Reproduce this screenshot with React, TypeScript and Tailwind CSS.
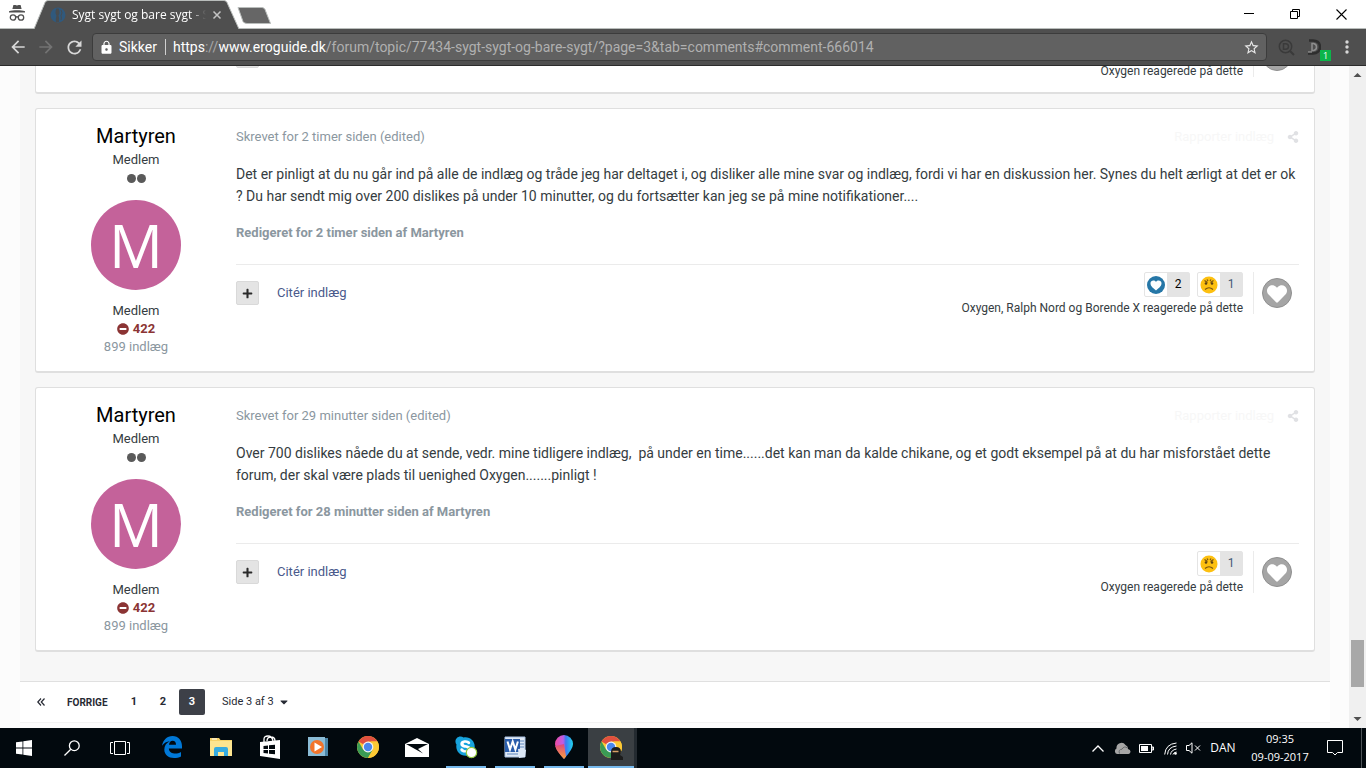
import type { ReactNode } from 'react';
import { clsx } from 'clsx';
import { FaCaretDown, FaHeart, FaMinusCircle, FaPlus, FaShareAlt, FaSkype } from 'react-icons/fa';
import { MdArrowBack, MdArrowForward, MdLock, MdRefresh, MdStarBorder } from 'react-icons/md';

type ReactionKind = 'like' | 'sad';

interface Reaction {
  kind: ReactionKind;
  count: number;
}

interface Post {
  id: number;
  written: string;
  body: string;
  edited: string;
  reactions: Reaction[];
  reactedBy: string;
}

const posts: Post[] = [
  {
    id: 1,
    written: 'Skrevet for 2 timer siden (edited)',
    body: 'Det er pinligt at du nu går ind på alle de indlæg og tråde jeg har deltaget i, og disliker alle mine svar og indlæg, fordi vi har en diskussion her. Synes du helt ærligt at det er ok ? Du har sendt mig over 200 dislikes på under 10 minutter, og du fortsætter kan jeg se på mine notifikationer....',
    edited: 'Redigeret for 2 timer siden af Martyren',
    reactions: [
      { kind: 'like', count: 2 },
      { kind: 'sad', count: 1 },
    ],
    reactedBy: 'Oxygen, Ralph Nord og Borende X reagerede på dette',
  },
  {
    id: 2,
    written: 'Skrevet for 29 minutter siden (edited)',
    body: 'Over 700 dislikes nåede du at sende, vedr. mine tidligere indlæg,\u00a0 på under en time......det kan man da kalde chikane, og et godt eksempel på at du har misforstået dette forum, der skal være plads til uenighed Oxygen.......pinligt !',
    edited: 'Redigeret for 28 minutter siden af Martyren',
    reactions: [{ kind: 'sad', count: 1 }],
    reactedBy: 'Oxygen reagerede på dette',
  },
];

/* ---------- Browser chrome ---------- */

function TitleBar() {
  return (
    <div className="flex h-7 shrink-0 bg-white">
      <div className="flex w-[34px] justify-center pt-1">
        <svg width="18" height="18" viewBox="0 0 18 18" fill="#4f4f4f">
          <path d="M5.4 1h2l1.6.6 1.6-.6h2l1 4H4.400z" />
          <path d="M1 7.200C5 6 13 6 17 7.200v1.300H1z" />
          <g fill="none" stroke="#4f4f4f" strokeWidth="1.300">
            <circle cx="5" cy="13.500" r="2.700" />
            <circle cx="13" cy="13.500" r="2.700" />
            <path d="M7.700 13.200q1.300-.9 2.600 0" />
          </g>
        </svg>
      </div>
      <div className="relative flex h-[29px] w-[205px] items-center pl-4">
        <svg className="absolute inset-0 h-full w-full" viewBox="0 0 205 29">
          <path d="M0 29 11 2.500Q12 .5 14 .5H190Q192 .5 193 2.500L205 29" fill="#4f4f4f" stroke="#b9bdbb" />
        </svg>
        <svg width="16" height="16" viewBox="0 0 16 16" className="relative">
          <circle cx="8" cy="8" r="7.500" fill="#30597d" />
          <path d="M6.500 1.500q-2 4 0 7-1 3-.5 6.500h3q.5-4-.5-6.500 2-3 0-7z" fill="#474c50" />
          <path d="M11 3q2 3 0 5.500.8 3 0 4.500" fill="none" stroke="#474c50" />
        </svg>
        <span className="relative ml-[6px] w-[134px] overflow-hidden whitespace-nowrap text-xs text-white [mask-image:linear-gradient(to_right,#000_118px,transparent)]">
          Sygt sygt og bare sygt - S
        </span>
        <button className="relative ml-[6px]" aria-label="Luk fane">
          <svg width="10" height="10" viewBox="0 0 10 10" stroke="#c4c4c4" strokeWidth="1.500">
            <path d="M1.500 1.500l7 7M8.500 1.500l-7 7" />
          </svg>
        </button>
      </div>
      <button className="-ml-1 mt-[6px] h-5" aria-label="Ny fane">
        <svg width="38" height="20" viewBox="0 0 38 20">
          <path d="M3 1.500H27Q29 1.500 30 3.500L35.500 17.500H12Q9 17.500 8 15.500z" fill="#666" stroke="#b9bdbb" />
        </svg>
      </button>
      <div className="flex-1" />
      <div className="flex pr-0.5">
        <button className="flex w-[46px] items-center justify-center" aria-label="Minimer">
          <svg width="10" height="10" viewBox="0 0 10 10">
            <path d="M0 4.500h10" stroke="#000" />
          </svg>
        </button>
        <button className="flex w-[46px] items-center justify-center" aria-label="Gendan">
          <svg width="10" height="10" viewBox="0 0 10 10" fill="none" stroke="#000">
            <path d="M.5 2.500h7v7h-7zM2.500 2.500v-2h7v7h-2" />
          </svg>
        </button>
        <button className="flex w-[46px] items-center justify-center" aria-label="Luk">
          <svg width="11" height="11" viewBox="0 0 11 11" stroke="#000" strokeWidth="1.100">
            <path d="M.5.5l10 10M10.500.5l-10 10" />
          </svg>
        </button>
      </div>
    </div>
  );
}

function ToolBar() {
  return (
    <div className="flex h-[38px] shrink-0 items-center border-t border-b border-t-[#b9bdbb] border-b-[#2b2b2b] bg-[#4f4f4f] pl-1 text-white">
      <button className="flex w-7 justify-center text-[#d8d8d8]" aria-label="Tilbage">
        <MdArrowBack size={20} />
      </button>
      <button className="flex w-7 justify-center text-[#737373]" aria-label="Frem">
        <MdArrowForward size={20} />
      </button>
      <button className="flex w-7 justify-center text-[#d8d8d8]" aria-label="Genindlæs">
        <MdRefresh size={21} />
      </button>
      <form className="ml-1 flex h-7 min-w-0 flex-1 items-center rounded-sm border border-[#3c3c3c] bg-[#616161] px-[6px] font-[Roboto,sans-serif] text-sm">
        <MdLock size={15} className="shrink-0" />
        <span className="ml-[5px] w-[46px]">Sikker</span>
        <span className="h-4 w-px bg-[#d0d0d0]" />
        <label htmlFor="address" className="ml-[7px] whitespace-nowrap">
          https<span className="text-[#a8a8a8]">://</span>www.eroguide.dk
        </label>
        <input
          id="address"
          type="text"
          className="min-w-0 flex-1 bg-transparent text-[#b0b0b0] outline-none"
          defaultValue="/forum/topic/77434-sygt-sygt-og-bare-sygt/?page=3&tab=comments#comment-666014"
        />
        <button type="button" className="shrink-0 text-[#e8e8e8]" aria-label="Bogmærk">
          <MdStarBorder size={17} />
        </button>
      </form>
      <button className="ml-[5px] flex w-7 justify-center" aria-label="Søgeudvidelse">
        <svg width="17" height="17" viewBox="0 0 17 17" fill="none" stroke="#3a3a3a" strokeWidth="1.500">
          <circle cx="7.500" cy="7.500" r="6.200" />
          <path d="M12 12l4 4" strokeWidth="2" />
          <path d="M5.500 4.800h2q3 .2 3 2.700t-3 2.700h-2z" />
        </svg>
      </button>
      <button className="relative flex w-7 justify-center" aria-label="Udvidelse">
        <svg width="14" height="16" viewBox="0 0 14 16" fill="none">
          <path d="M2 1.500h4q7 .5 7 6.500t-7 6.500H1" stroke="#2e2e2e" strokeWidth="2.500" />
          <path d="M5 4.500h1.500q3 .5 3 3.500t-3 3.500H5z" stroke="#8e8e8e" strokeWidth="1.500" />
          <path d="M1 13h4" stroke="#aaa" />
        </svg>
        <span className="absolute top-[11px] left-[20px] h-[11px] w-[11px] bg-[#0bb54a] text-center text-[9px] leading-[11px]">1</span>
      </button>
      <button className="flex w-[38px] justify-center" aria-label="Menu">
        <svg width="4" height="14" viewBox="0 0 4 14" fill="#d8d8d8">
          <circle cx="2" cy="2" r="1.700" />
          <circle cx="2" cy="7" r="1.700" />
          <circle cx="2" cy="12" r="1.700" />
        </svg>
      </button>
    </div>
  );
}

function ScrollBar() {
  return (
    <div className="flex w-[17px] shrink-0 flex-col items-center bg-[#f0f0f0]">
      <svg width="17" height="17" viewBox="0 0 17 17" fill="#505050">
        <path d="M4.500 11 8.500 7l4 4z" />
      </svg>
      <div className="flex flex-1 flex-col justify-end pb-6">
        <div className="h-[47px] w-[13px] bg-[#a8a8a8]" />
      </div>
      <svg width="17" height="17" viewBox="0 0 17 17" fill="#505050">
        <path d="M4.500 6 8.500 10l4-4z" />
      </svg>
    </div>
  );
}

/* ---------- Forum ---------- */

function ReactionIcon({ kind }: { kind: ReactionKind }) {
  if (kind === 'like') {
    return (
      <svg width="18" height="18" viewBox="0 0 18 18">
        <circle cx="9" cy="9" r="9" fill="#2677a7" />
        <path d="M9 14.500C5 11.500 3.500 9.500 3.500 7.300 3.500 4.300 7.500 3.500 9 6c1.500-2.500 5.500-1.700 5.500 1.300 0 2.200-1.500 4.200-5.500 7.200z" fill="#fff" />
      </svg>
    );
  }
  return (
    <svg width="18" height="18" viewBox="0 0 18 18">
      <circle cx="9" cy="9" r="8.500" fill="#fdc010" />
      <g fill="none" stroke="#7a5410" strokeWidth="1.200">
        <path d="M4.500 4.500l3 2M13.500 4.500l-3 2M7 3.500l1 1.500M11 3.500l-1 1.500" />
        <path d="M5 13.500q4-3.500 8 0" />
      </g>
      <circle cx="6" cy="7.500" r="1.300" fill="#5d4113" />
      <circle cx="12" cy="7.500" r="1.300" fill="#5d4113" />
    </svg>
  );
}

interface PostFooterProps {
  reactions: Reaction[];
  reactedBy: string;
  canQuote?: boolean;
}

function PostFooter({ reactions, reactedBy, canQuote = true }: PostFooterProps) {
  return (
    <div className="flex h-[50px] items-center border-t border-[#ebebeb] pt-[7px]">
      <button
        className="flex h-6 w-[23px] items-center justify-center rounded-xs border border-[#d9d9d9] bg-[#e4e4e4] text-[#2a2a2a]"
        aria-label="Multicitér"
      >
        <FaPlus size={11} />
      </button>
      {canQuote && (
        <a href="#citer" className="ml-[18px] text-[13px] text-[#4a5a8c]">
          Citér indlæg
        </a>
      )}
      <div className="ml-auto flex flex-col items-end gap-[3px] self-start">
        <div className="flex h-[25px] gap-[7px]">
          {reactions.map((reaction) => (
            <div key={reaction.kind} className="flex w-[46px] rounded-xs border border-[#e4e4e4]">
              <span className="flex w-[22px] items-center justify-center">
                <ReactionIcon kind={reaction.kind} />
              </span>
              <span
                className={clsx(
                  'flex-1 bg-[#e4e4e4] text-center text-xs leading-[22px]',
                  reaction.kind === 'like' ? 'text-black' : 'text-[#445a75]'
                )}
              >
                {reaction.count}
              </span>
            </div>
          ))}
        </div>
        <p className="text-xs leading-4 text-[#353c41]">{reactedBy}</p>
      </div>
      <div className="ml-[10px] flex h-[42px] items-center border-l border-[#ebebeb] pr-[7px] pl-2">
        <button
          className="flex h-[30px] w-[30px] items-center justify-center rounded-full border border-[#8f8f8f] bg-[#a5a5a5] text-white"
          aria-label="Synes godt om"
        >
          <FaHeart size={20} className="mt-0.5" />
        </button>
      </div>
    </div>
  );
}

function Card({ children }: { children: ReactNode }) {
  return (
    <article className="flex shrink-0 rounded-[3px] border border-b-2 border-[#dfdfdf] bg-white py-[15px] pr-[15px]">
      {children}
    </article>
  );
}

function Author() {
  return (
    <aside className="flex w-[200px] shrink-0 flex-col items-center text-[13px] leading-[18px] text-[#353c41]">
      <h3 className="text-xl leading-6 text-black">Martyren</h3>
      <p className="mt-[3px]">Medlem</p>
      <div className="flex h-[19px] items-center gap-px">
        <span className="h-[9px] w-[9px] rounded-full bg-[#5a5a5a]" />
        <span className="h-[9px] w-[9px] rounded-full bg-[#5a5a5a]" />
      </div>
      <div className="my-3 flex h-[90px] w-[90px] items-center justify-center rounded-full bg-[#c4629a] font-['Open_Sans',sans-serif] text-[60px] leading-none text-white">
        M
      </div>
      <p>Medlem</p>
      <p className="flex items-center gap-1 font-bold text-[#8b3434]">
        <FaMinusCircle size={12} />
        422
      </p>
      <p className="text-[#8b979f]">899 indlæg</p>
    </aside>
  );
}

function PostCard({ post }: { post: Post }) {
  return (
    <Card>
      <Author />
      <div className="min-w-0 flex-1">
        <div className="flex h-[26px] items-center text-[13px] text-[#8b979f]">
          <a href="#skrevet">{post.written}</a>
          <a href="#rapporter" className="ml-auto text-[#f7f7f7]">
            Rapporter indlæg
          </a>
          <a href="#del" className="ml-[13px] text-[#e0e1e4]" aria-label="Del">
            <FaShareAlt size={12} />
          </a>
        </div>
        <p className="mt-[13px] text-sm leading-[22px] text-[#353c41]">{post.body}</p>
        <p className="mt-[15px] mb-5 text-[13px] leading-[22px] font-bold text-[#8b979f]">{post.edited}</p>
        <PostFooter reactions={post.reactions} reactedBy={post.reactedBy} />
      </div>
    </Card>
  );
}

function Pagination() {
  return (
    <nav className="flex h-[42px] shrink-0 items-center border-t border-b border-t-[#e0e0e0] border-b-[#f2f2f2] bg-white pl-[15px] text-[11px] text-[#272a34]">
      <a href="#first" className="flex w-3 justify-center" aria-label="Første side">
        <svg width="8" height="8" viewBox="0 0 8 8" fill="none" stroke="#272a34" strokeWidth="1.200">
          <path d="M4 .5.800 4 4 7.500M7.500.5 4.300 4l3.200 3.500" />
        </svg>
      </a>
      <a href="#prev" className="ml-5 w-[42px] text-[10px] font-bold">
        FORRIGE
      </a>
      <a href="#1" className="ml-3 w-[26px] text-center font-bold">
        1
      </a>
      <a href="#2" className="ml-[3px] w-[26px] text-center font-bold">
        2
      </a>
      <a href="#3" className="ml-[3px] w-[26px] rounded-xs bg-[#3d4048] text-center leading-[26px] font-bold text-white">
        3
      </a>
      <button className="ml-[17px] flex items-center gap-1">
        Side 3 af 3
        <FaCaretDown size={12} />
      </button>
    </nav>
  );
}

/* ---------- Taskbar ---------- */

function ChromeLogo() {
  return (
    <svg width="22" height="22" viewBox="0 0 22 22">
      <circle cx="11" cy="11" r="11" fill="#fcc934" />
      <path d="M11 11 1.500 5.500A11 11 0 0 1 20.500 5.500H11z" fill="#e0503f" />
      <path d="M1.500 5.500A11 11 0 0 0 11 22l4.800-8.300L11 11 6.200 13.700z" fill="#3a9b55" />
      <path d="M20.500 5.500A11 11 0 0 1 11 22l4.800-8.300Q17 9 14 5.500z" fill="#fcc934" />
      <circle cx="11" cy="11" r="5.400" fill="#f4f4f4" />
      <circle cx="11" cy="11" r="4.200" fill="#4a87ec" />
    </svg>
  );
}

function TaskItem({ label, running, active, children }: { label: string; running?: boolean; active?: boolean; children: ReactNode }) {
  return (
    <button
      className={clsx('flex h-10 w-[49px] flex-col items-center', active && 'border-r-3 border-[#232a30] bg-[#3a3f43]')}
      aria-label={label}
    >
      <span className="flex flex-1 items-center">{children}</span>
      <span className={clsx('h-0.5', active ? 'w-full' : 'w-10', (running || active) && 'bg-[#76b9ed]')} />
    </button>
  );
}

function TaskBar() {
  return (
    <footer className="flex h-10 shrink-0 bg-[#02090e] text-white">
      <button className="flex w-12 items-center justify-center" aria-label="Start">
        <svg width="16" height="16" viewBox="0 0 16 16" fill="#fff">
          <path d="M0 2.300 6.500 1.400v6.200H0zM7.300 1.300 16 0v7.600H7.300zM0 8.400h6.500v6.200L0 13.700zM7.300 8.400H16V16l-8.700-1.300z" />
        </svg>
      </button>
      <button className="flex w-12 items-center justify-center" aria-label="Søg">
        <svg width="16" height="16" viewBox="0 0 16 16" fill="none" stroke="#fff" strokeWidth="1.300">
          <circle cx="10.300" cy="5.700" r="4.900" />
          <path d="M6.800 9.200.5 15.500" />
        </svg>
      </button>
      <button className="flex w-12 items-center justify-center" aria-label="Opgavevisning">
        <svg width="20" height="14" viewBox="0 0 20 14" fill="none" stroke="#fff">
          <path d="M4.500.5h11v13h-11zM3 1.500H.5v11H3M17 1.500h2.500v11H17" />
        </svg>
      </button>
      <div className="ml-[3px] flex">
        <TaskItem label="Edge">
          {/* Old "e" logo with the open right side */}
          <svg width="20" height="22" viewBox="0 0 20 22">
            <path
              d="M0 9.800C1 4 5 0 10.500 0 16.500 0 20 4.500 20 10.200v2.300H6.800c.3 3.800 3.600 5 6.400 5 2.100 0 4-.6 5.800-1.600v4.500C17 21.500 14.500 22 12 22 6.500 22 2.300 18.800 2.300 13.500c0-3.700 2-6.800 5.500-8.300C4.500 5.400 2 7 0 9.800zM7 8.800h7c0-2.400-1.200-4-3.400-4C8.700 4.800 7.300 6.400 7 8.800z"
              fill="#0078d7"
            />
          </svg>
        </TaskItem>
        <TaskItem label="Stifinder">
          <svg width="22" height="20" viewBox="0 0 22 20">
            <path d="M0 1h9l1.500 2H22v15H0z" fill="#f6d268" />
            <path d="M0 4h22v15H0z" fill="#fde590" />
            <path d="M2 2h5" stroke="#fff" />
            <path d="M4 19v-7q0-2 2-2h10q2 0 2 2v7h-4v-4H8v4z" fill="#36abe0" />
          </svg>
        </TaskItem>
        <TaskItem label="Store">
          <svg width="22" height="24" viewBox="0 0 22 24">
            <path d="M1 7 21 5v19L1 21z" fill="#fff" />
            <path d="M5 7V4q0-3 4-3t5 5M8 6q0-4 4-4t4 4" fill="none" stroke="#fff" strokeWidth="1.300" />
            <path d="M4.500 11 9 10.500V14H4.500zM10 10.300l6-.6V14h-6zM4.500 15H9v3.500L4.500 18zM10 15h6v4.300l-6-.6z" fill="#02090e" />
          </svg>
        </TaskItem>
        <TaskItem label="Medieafspiller">
          <svg width="21" height="20" viewBox="0 0 21 20">
            <path d="M3 1h17v18H3z" fill="#4c86a8" />
            <path d="M0 0h17v19H0z" fill="#8bbcd6" />
            <circle cx="9" cy="10" r="7" fill="#f2742b" />
            <path d="M6.500 5.500v9l7.500-4.500z" fill="#fff" />
          </svg>
        </TaskItem>
        <TaskItem label="Google Chrome">
          <ChromeLogo />
        </TaskItem>
        <TaskItem label="Mail">
          <svg width="24" height="19" viewBox="0 0 24 19">
            <path d="M0 6 12 0l12 6v13H0z" fill="#fff" />
            <path d="M1 6h22L13 11l5 4.500L1 6z" fill="#02090e" />
          </svg>
        </TaskItem>
        <TaskItem label="Skype" running>
          <svg width="24" height="24" viewBox="0 0 24 24">
            <circle cx="11" cy="11" r="8" fill="#fff" />
            <FaSkype size={23} color="#17a3dd" />
            <circle cx="17.500" cy="17.500" r="5.200" fill="#fff" stroke="#92c83e" strokeWidth="1.200" />
          </svg>
        </TaskItem>
        <TaskItem label="Word" running>
          <svg width="22" height="22" viewBox="0 0 22 22">
            <path d="M1 1h20v20H1z" fill="#dfe9f6" stroke="#a9c1e1" />
            <path d="M16 5h4M16 8h4M16 11h4M3 18h11" stroke="#5e87bf" />
            <path d="M1 3h15v13H1z" fill="#2a5dab" />
            <path d="M3.500 5.500l2.500 8 2.700-8 2.700 8 2.500-8" fill="none" stroke="#fff" strokeWidth="2" />
            <path d="M14 13q4-1 8 1l-1 7-6 1z" fill="#dce8f7" />
          </svg>
        </TaskItem>
        <TaskItem label="Paint 3D" running>
          <svg width="18" height="24" viewBox="0 0 18 24">
            <defs>
              <linearGradient id="drop" x1="0" y1="0" x2="1" y2="0">
                <stop offset="0" stopColor="#ee4ba0" />
                <stop offset=".45" stopColor="#c05de5" />
                <stop offset=".6" stopColor="#3d7af0" />
                <stop offset="1" stopColor="#20d5ee" />
              </linearGradient>
              <linearGradient id="drop-tip" x1="0" y1="0" x2="0" y2="1">
                <stop offset="0" stopColor="#e0457f" />
                <stop offset="1" stopColor="#f7a23c" />
              </linearGradient>
            </defs>
            <path d="M9 0a9 9 0 0 1 9 9q0 5-9 15Q0 14 0 9a9 9 0 0 1 9-9z" fill="url(#drop)" />
            <path d="M9 9 .3 11Q1 15.500 9 24l2-2.500z" fill="url(#drop-tip)" />
          </svg>
        </TaskItem>
        <TaskItem label="Google Chrome, inkognito" active>
          <span className="relative flex">
            <ChromeLogo />
            <svg className="absolute top-[11px] left-[10px]" width="13" height="14" viewBox="0 0 13 14">
              <path d="M1 5Q1 0 6 0t5 5l-1 3 3 2v3H1V9z" fill="#1c1c1c" />
              <path d="M2.500 4.500h6" stroke="#d9a066" strokeWidth="1.500" />
            </svg>
          </span>
        </TaskItem>
      </div>
      <div className="ml-auto flex items-center text-xs">
        <button className="flex w-6 justify-center" aria-label="Vis skjulte ikoner">
          <svg width="12" height="7" viewBox="0 0 12 7" fill="none" stroke="#fff" strokeWidth="1.300">
            <path d="M.5 6.500 6 1l5.500 5.500" />
          </svg>
        </button>
        <span className="flex w-6 justify-center">
          <svg width="17" height="12" viewBox="0 0 17 12" fill="#a6a6a6">
            <path d="M3 12a3 3 0 0 1-.5-5.500A5 5 0 0 1 11.500 3a4 4 0 0 1 2.500 4q2.500.5 2.500 2.500T14.500 12z" />
            <path d="M5.500 11.500Q4 7.500 8 7.200 10 3.500 13.500 6" fill="none" stroke="#66696b" />
          </svg>
        </span>
        <span className="flex w-6 justify-center">
          <svg width="15" height="9" viewBox="0 0 15 9">
            <path d="M.5.5h12v8H.5zM13 3h1.500v3H13z" fill="none" stroke="#fff" />
            <path d="M2 2h7v5H2z" fill="#fff" />
          </svg>
        </span>
        <span className="flex w-[25px] justify-center">
          <svg width="13" height="13" viewBox="0 0 13 13" fill="none" stroke="#fff">
            <path d="M.7 12.500Q1.500 2 12.500 1M3.500 12.500Q4 5 12.500 4M6.500 12.500q.5-4.500 6-5.500" />
            <path d="M9 12.500q.5-2 3.500-2.500" />
            <circle cx="11.500" cy="11.500" r="1.300" fill="#fff" stroke="none" />
          </svg>
        </span>
        <span className="flex w-5 justify-center">
          <svg width="15" height="12" viewBox="0 0 15 12" fill="none" stroke="#fff">
            <path d="M.5 3.500H3L6 .8v10.400L3 8.500H.5zM9 3.500l5 5M14 3.500l-5 5" />
          </svg>
        </span>
        <span className="w-10 text-center">DAN</span>
        <div className="w-[74px] text-center text-[11px] leading-[18px]">
          <p>09:35</p>
          <p>09-09-2017</p>
        </div>
        <button className="flex w-9 justify-center" aria-label="Meddelelser">
          <svg width="16" height="16" viewBox="0 0 16 16" fill="none" stroke="#fff">
            <path d="M.5.5h15v12H10.500L8 15l-2.500-2.500h-5z" />
          </svg>
        </button>
        <span className="mr-1 ml-2 h-10 w-px bg-[#4d5357]" />
      </div>
    </footer>
  );
}

export default function App() {
  return (
    <div className="flex h-screen flex-col overflow-hidden font-['Open_Sans',sans-serif]">
      <TitleBar />
      <ToolBar />
      <div className="flex min-h-0 flex-1 bg-[#fcfcfc] font-[Roboto,sans-serif]">
        {/* The thread is scrolled to its end, so the content hangs from the bottom edge */}
        <main className="flex min-w-0 flex-1 flex-col justify-end overflow-hidden pr-[19px] pb-[5px] pl-5">
          <div className="flex flex-col gap-[14px] bg-[#f7f7f7] px-[15px] pb-[29px]">
            <Card>
              <div className="flex-1 pl-[200px]">
                <PostFooter reactions={[]} reactedBy="Oxygen reagerede på dette" canQuote={false} />
              </div>
            </Card>
            {posts.map((post) => (
              <PostCard key={post.id} post={post} />
            ))}
          </div>
          <Pagination />
        </main>
        <ScrollBar />
      </div>
      <TaskBar />
    </div>
  );
}
